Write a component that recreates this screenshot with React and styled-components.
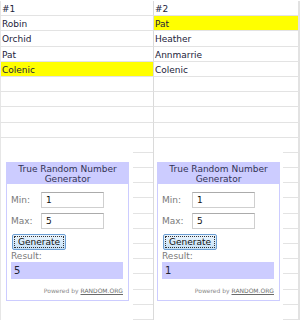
import styled, { createGlobalStyle } from "styled-components";

const GlobalStyle = createGlobalStyle`
  html, body {
    margin: 0;
    padding: 0;
    background: #ffffff;
  }
  body {
    font-family: "DejaVu Sans", Verdana, sans-serif;
  }
`

const Sheet = styled.div`
  width: 300px;
  height: 320px;
  padding-top: 1px;
  box-sizing: border-box;
  overflow: hidden;
  display: flex;
  flex-direction: column;
`

const Row = styled.div`
  display: flex;
  height: 15.2px;
  flex-shrink: 0;
`

const Cell = styled.div`
  box-sizing: border-box;
  height: 100%;
  width: ${(p) => (p.$col === 1 ? "154px" : "146px")};
  border-bottom: 1px solid #e3e3e3;
  border-left: ${(p) => (p.$col === 1 ? "1px solid #e6e6e6" : "none")};
  border-right: ${(p) => (p.$col === 1 ? "1px solid #dadada" : "2px solid #e2e2e2")};
  background: ${(p) => (p.$hl ? "#ffff00" : "#ffffff")};
  padding-left: ${(p) => (p.$col === 1 ? "1px" : "1px")};
  font-size: 9px;
  line-height: 16px;
  color: #22223a;
  white-space: nowrap;
`

const Lower = styled.div`
  display: flex;
  flex: 1;
`

const Pane = styled.div`
  box-sizing: border-box;
  display: flex;
  width: ${(p) => (p.$col === 1 ? "154px" : "146px")};
  border-left: ${(p) => (p.$col === 1 ? "1px solid #e6e6e6" : "none")};
  border-right: ${(p) => (p.$col === 1 ? "1px solid #dadada" : "2px solid #e2e2e2")};
`

const Cover = styled.div`
  width: ${(p) => (p.$col === 1 ? "132px" : "129px")};
  padding: 24px 0 0 ${(p) => (p.$col === 1 ? "5px" : "3px")};
  box-sizing: border-box;
  background: #ffffff;
`

const Strip = styled.div`
  flex: 1;
  display: flex;
  flex-direction: column;
`

const StripLine = styled.div`
  height: 15.2px;
  flex-shrink: 0;
  box-sizing: border-box;
  border-bottom: 1px solid #e3e3e3;
`

const Widget = styled.div`
  width: 123px;
  height: 139px;
  box-sizing: border-box;
  border: 1px solid #ccccff;
  background: #ffffff;
  display: flex;
  flex-direction: column;
`

const Header = styled.div`
  background: #ccccff;
  height: 21px;
  padding-top: 1px;
  box-sizing: border-box;
  text-align: center;
  font-size: 9px;
  line-height: 10px;
  color: #333355;
`

const Body = styled.div`
  padding: 8px 4px 0 4px;
  display: flex;
  flex-direction: column;
`

const Field = styled.div`
  display: flex;
  align-items: center;
  height: 16px;
  margin-bottom: 5px;
`

const Label = styled.span`
  width: 30px;
  font-size: 9px;
  color: #7a7a7a;
`

const Input = styled.div`
  width: 63px;
  height: 16px;
  box-sizing: border-box;
  border: 1px solid #cfcfcf;
  border-top-color: #ababab;
  padding-left: 4px;
  font-size: 9px;
  line-height: 14px;
  color: #111111;
`

const Button = styled.div`
  width: 54px;
  height: 16px;
  box-sizing: border-box;
  margin-left: 1px;
  border: 1px solid #6d9fd3;
  border-radius: 2px;
  background: linear-gradient(#eaf5fe, #c6e1f7);
  padding: 1px;
`

const ButtonFace = styled.div`
  height: 100%;
  box-sizing: border-box;
  border: 1px dotted #333333;
  font-size: 9px;
  line-height: 11px;
  text-align: center;
  color: #111111;
`

const ResultLabel = styled.div`
  margin-top: 1px;
  font-size: 9px;
  line-height: 11px;
  color: #7a7a7a;
`

const ResultBox = styled.div`
  width: 112px;
  height: 17px;
  background: #ccccff;
  padding-left: 3px;
  box-sizing: border-box;
  font-size: 10px;
  line-height: 18px;
  color: #222233;
`

const Powered = styled.div`
  margin-top: 8px;
  padding-right: 1px;
  text-align: right;
  font-size: 6px;
  color: #8a8a8a;

  span {
    text-decoration: underline;
    color: #6a6a6a;
  }
`

const col1 = ["#1", "Robin", "Orchid", "Pat", "Colenic", "", "", "", ""];
const col2 = ["#2", "Pat", "Heather", "Annmarrie", "Colenic", "", "", "", ""];
const hl1 = [false, false, false, false, true, false, false, false, false];
const hl2 = [false, true, false, false, false, false, false, false, false];

const Generator = ({ result }) => (
  <Widget>
    <Header>
      True Random Number
      <br />
      Generator
    </Header>
    <Body>
      <Field>
        <Label>Min:</Label>
        <Input>1</Input>
      </Field>
      <Field>
        <Label>Max:</Label>
        <Input>5</Input>
      </Field>
      <Button>
        <ButtonFace>Generate</ButtonFace>
      </Button>
      <ResultLabel>Result:</ResultLabel>
      <ResultBox>{result}</ResultBox>
      <Powered>
        Powered by <span>RANDOM.ORG</span>
      </Powered>
    </Body>
  </Widget>
)

const App = () => {
  const lines = Array.from({ length: 12 });

  return (
    <>
      <GlobalStyle />
      <Sheet>
        {col1.map((name, i) => (
          <Row key={i}>
            <Cell $col={1} $hl={hl1[i]}>{name}</Cell>
            <Cell $col={2} $hl={hl2[i]}>{col2[i]}</Cell>
          </Row>
        ))}
        <Lower>
          <Pane $col={1}>
            <Cover $col={1}>
              <Generator result="5" />
            </Cover>
            <Strip>
              {lines.map((_, i) => <StripLine key={i} />)}
            </Strip>
          </Pane>
          <Pane $col={2}>
            <Cover $col={2}>
              <Generator result="1" />
            </Cover>
            <Strip>
              {lines.map((_, i) => <StripLine key={i} />)}
            </Strip>
          </Pane>
        </Lower>
      </Sheet>
    </>
  )
}

export default App
